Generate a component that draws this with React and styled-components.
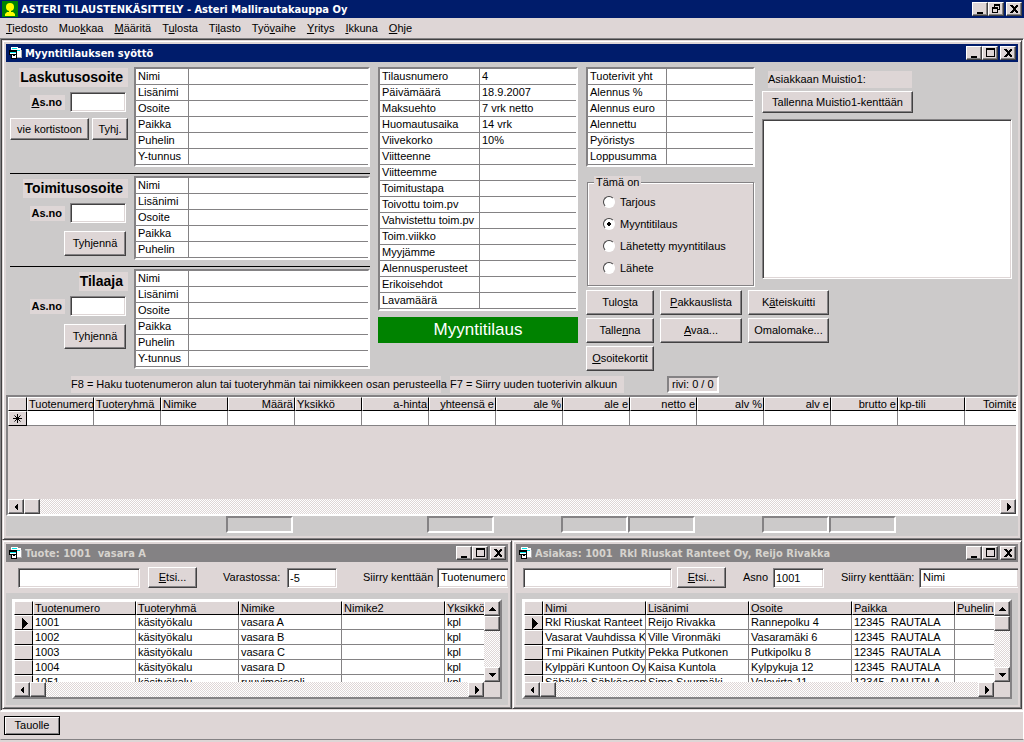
import React, { useState } from "react";
import styled, { createGlobalStyle, css } from "styled-components";

const face = "#ded6d6";
const panel = "#cccaca";
const navy = "#001c6b";
const grey = "#848284";
const dark = "#424142";

const menus = [
  "&Tiedosto",
  "Muo&kkaa",
  "&Määritä",
  "T&ulosta",
  "Ti&lasto",
  "Työ&vaihe",
  "&Yritys",
  "&Ikkuna",
  "&Ohje",
];

const addressRows = ["Nimi", "Lisänimi", "Osoite", "Paikka", "Puhelin"];

const orderRows = [
  ["Tilausnumero", "4"],
  ["Päivämäärä", "18.9.2007"],
  ["Maksuehto", "7 vrk netto"],
  ["Huomautusaika", "14 vrk"],
  ["Viivekorko", "10%"],
  ["Viitteenne", ""],
  ["Viitteemme", ""],
  ["Toimitustapa", ""],
  ["Toivottu toim.pv", ""],
  ["Vahvistettu toim.pv", ""],
  ["Toim.viikko", ""],
  ["Myyjämme", ""],
  ["Alennusperusteet", ""],
  ["Erikoisehdot", ""],
  ["Lavamäärä", ""],
];

const totalRows = [
  "Tuoterivit yht",
  "Alennus %",
  "Alennus euro",
  "Alennettu",
  "Pyöristys",
  "Loppusumma",
];

const orderTypes = ["Tarjous", "Myyntitilaus", "Lähetetty myyntitilaus", "Lähete"];

const actions = [
  "Tulo&sta",
  "&Pakkauslista",
  "K&äteiskuitti",
  "Talle&nna",
  "&Avaa...",
  "Omalomake...",
  "&Osoitekortit",
];

const lineColumns = [
  { name: "Tuotenumero" },
  { name: "Tuoteryhmä" },
  { name: "Nimike" },
  { name: "Määrä", right: true },
  { name: "Yksikkö" },
  { name: "a-hinta", right: true },
  { name: "yhteensä e", right: true },
  { name: "ale %", right: true },
  { name: "ale e", right: true },
  { name: "netto e", right: true },
  { name: "alv %", right: true },
  { name: "alv e", right: true },
  { name: "brutto e", right: true },
  { name: "kp-tili" },
  { name: "Toimitettu", right: true },
];

// grid columns that have a sum box under them
const sumColumns = [4, 7, 9, 10, 12, 13];

const productColumns = ["Tuotenumero", "Tuoteryhmä", "Nimike", "Nimike2", "Yksikkö"];
const products = [
  ["1001", "käsityökalu", "vasara A", "", "kpl"],
  ["1002", "käsityökalu", "vasara B", "", "kpl"],
  ["1003", "käsityökalu", "vasara C", "", "kpl"],
  ["1004", "käsityökalu", "vasara D", "", "kpl"],
  ["1051", "käsityökalu", "ruuvimeisseli", "", "kpl"],
];

const customerColumns = ["Nimi", "Lisänimi", "Osoite", "Paikka", "Puhelin"];
const customers = [
  ["Rkl Riuskat Ranteet", "Reijo Rivakka", "Rannepolku 4", "12345  RAUTALA", ""],
  ["Vasarat Vauhdissa Ky", "Ville Vironmäki", "Vasaramäki 6", "12345  RAUTALA", ""],
  ["Tmi Pikainen Putkityö", "Pekka Putkonen", "Putkipolku 8", "12345  RAUTALA", ""],
  ["Kylppäri Kuntoon Oy", "Kaisa Kuntola", "Kylpykuja 12", "12345  RAUTALA", ""],
  ["Sähäkkä Sähköasennus", "Simo Suurmäki", "Valovirta 11", "12345  RAUTALA", ""],
];

const Mnemonic = ({ text }) => {
  const at = text.indexOf("&");
  if (at < 0) return <span>{text}</span>;
  return (
    <span>
      {text.slice(0, at)}
      <u>{text[at + 1]}</u>
      {text.slice(at + 2)}
    </span>
  );
};

const FormIcon = () => (
  <svg width="14" height="14" viewBox="0 0 14 14" shapeRendering="crispEdges" aria-hidden="true">
    <path d="M3 1h7v1h3v9H7V7H3z" fill="#fff" />
    <path d="M4 2h5v1H4zM8 4h4v1H8z" fill="#00e3e7" />
    <path d="M13 4h1v8H9v-1h4z" fill="#adaaad" />
    <path d="M1 4h8v9H3V9H1z" fill="#000" />
    <path d="M2 6h6v1H2z" fill="#00e3e7" />
    <path d="M2 7h6v1H2zM4 9h4v3H4z" fill="#fff" />
    <path d="M5 9h2v1H5z" fill="#000" />
  </svg>
);

const AppIcon = () => (
  <svg width="16" height="16" viewBox="0 0 16 16" aria-hidden="true">
    <path d="M0 0h16v16H0z" fill="#008200" />
    <circle cx="8" cy="6" r="4" fill="#ff0" />
    <path d="M7 9h2v3H7z" fill="#ff0" />
    <path d="M3 15v-2l2-2h6l2 2v2z" fill="#ff0" />
  </svg>
);

const glyphs = {
  min: "M3 9h6v2H3z",
  max: "M2 1h9v9H2zM3 3v6h7V3z",
  restore: "M4 1h6v6H8v3H2V4h2zM5 3v1h3v2h1V3zM3 6v3h4V6z",
  close: "M2 2h2l2 2 2-2h2v1L7 6l3 3v1H8L6 8l-2 2H2V9l3-3-3-3z",
  left: "M8 2v8L4 6z",
  right: "M5 2v8l4-4z",
  up: "M2 8h8L6 4z",
  down: "M2 4h8L6 8z",
  row: "M4 1v11l6-5.5z",
};

const Glyph = ({ name }) => (
  <svg width="12" height="12" viewBox="0 0 12 12" shapeRendering="crispEdges" aria-hidden="true">
    <path d={glyphs[name]} fill="#000" fillRule="evenodd" />
  </svg>
);

const NewRowIcon = () => (
  <svg width="11" height="11" viewBox="0 0 11 11" aria-hidden="true">
    <path
      d="M5.5 1v9M1 5.5h9M2.5 2.5l6 6M8.5 2.5l-6 6"
      stroke="#000"
      strokeWidth="1"
      fill="none"
    />
  </svg>
);

const WindowButtons = ({ restore }) => (
  <Controls>
    <ControlButton aria-label="Pienennä">
      <Glyph name="min" />
    </ControlButton>
    <ControlButton aria-label="Suurenna">
      <Glyph name={restore ? "restore" : "max"} />
    </ControlButton>
    <ControlButton aria-label="Sulje" $gap>
      <Glyph name="close" />
    </ControlButton>
  </Controls>
);

const HorizontalScroll = () => (
  <Track>
    <ScrollButton aria-label="Vasemmalle">
      <Glyph name="left" />
    </ScrollButton>
    <Thumb />
    <Spacer />
    <ScrollButton aria-label="Oikealle">
      <Glyph name="right" />
    </ScrollButton>
  </Track>
);

const VerticalScroll = () => (
  <Track $vertical>
    <ScrollButton aria-label="Ylös">
      <Glyph name="up" />
    </ScrollButton>
    <Thumb />
    <Spacer />
    <ScrollButton aria-label="Alas">
      <Glyph name="down" />
    </ScrollButton>
  </Track>
);

const Properties = ({ rows, labelWidth, label }) => (
  <PropertyTable aria-label={label}>
    <tbody>
      {rows.map(([name, value]) => (
        <tr key={name}>
          <PropertyName scope="row" $width={labelWidth}>
            {name}
          </PropertyName>
          <PropertyValue>{value}</PropertyValue>
        </tr>
      ))}
    </tbody>
  </PropertyTable>
);

const AddressSection = ({ id, title, numberLabel, rows, first, children }) => (
  <Address>
    <AddressSide $first={first}>
      <AddressTitle>{title}</AddressTitle>
      <NumberRow>
        <NumberLabel htmlFor={id}>
          <Mnemonic text={numberLabel} />
        </NumberLabel>
        <TextBox id={id} $width={56} />
      </NumberRow>
      <SideButtons $first={first}>{children}</SideButtons>
    </AddressSide>
    <Properties label={title} labelWidth={53} rows={rows.map((r) => [r, ""])} />
  </Address>
);

const BrowseGrid = ({ label, columns, rows }) => (
  <BrowseFrame>
    <BrowseView>
      <BrowseClip>
        <GridTable $width={533} aria-label={label}>
          <colgroup>
            <MarkCol />
            {columns.map((c) => (
              <DataCol key={c} $width={103} />
            ))}
          </colgroup>
          <thead>
            <tr>
              <GridHead />
              {columns.map((c) => (
                <GridHead key={c}>{c}</GridHead>
              ))}
            </tr>
          </thead>
          <tbody>
            {rows.map((row, i) => (
              <tr key={row[0]}>
                <RowMark>{i === 0 && <Glyph name="row" />}</RowMark>
                {row.map((cell, j) => (
                  <GridCell key={j}>{cell}</GridCell>
                ))}
              </tr>
            ))}
          </tbody>
        </GridTable>
      </BrowseClip>
      <VerticalScroll />
    </BrowseView>
    <BrowseFoot>
      <HorizontalScroll />
      <Corner />
    </BrowseFoot>
  </BrowseFrame>
);

const App = () => {
  const [type, setType] = useState("Myyntitilaus");

  return (
    <Page>
      <GlobalStyle />
      <AppTitle>
        <AppIcon />
        <TitleText>ASTERI TILAUSTENKÄSITTELY - Asteri Mallirautakauppa Oy</TitleText>
        <WindowButtons restore />
      </AppTitle>
      <MenuBar>
        {menus.map((m) => (
          <MenuItem key={m}>
            <Mnemonic text={m} />
          </MenuItem>
        ))}
      </MenuBar>

      <Workspace>
        <Window>
          <WindowTitle $active>
            <FormIcon />
            <TitleText>Myyntitilauksen syöttö</TitleText>
            <WindowButtons />
          </WindowTitle>
          <OrderForm>
            <FormColumns>
              <AddressColumn>
                <AddressSection
                  id="billing"
                  title="Laskutusosoite"
                  numberLabel="&As.no"
                  rows={[...addressRows, "Y-tunnus"]}
                  first
                >
                  <Button $width={79}>vie kortistoon</Button>
                  <Button $width={36}>Tyhj.</Button>
                </AddressSection>
                <Rule />
                <AddressSection
                  id="delivery"
                  title="Toimitusosoite"
                  numberLabel="As.no"
                  rows={addressRows}
                >
                  <Button $width={62} $tall>
                    Tyhjennä
                  </Button>
                </AddressSection>
                <Rule />
                <AddressSection
                  id="orderer"
                  title="Tilaaja"
                  numberLabel="As.no"
                  rows={[...addressRows, "Y-tunnus"]}
                >
                  <Button $width={62} $tall>
                    Tyhjennä
                  </Button>
                </AddressSection>
              </AddressColumn>

              <OrderColumn>
                <Properties label="Tilauksen tiedot" labelWidth={100} rows={orderRows} />
                <Banner>Myyntitilaus</Banner>
              </OrderColumn>

              <RightColumn>
                <RightTop>
                  <TotalsColumn>
                    <Properties
                      label="Summat"
                      labelWidth={79}
                      rows={totalRows.map((r) => [r, ""])}
                    />
                    <TypeGroup>
                      <legend>Tämä on</legend>
                      {orderTypes.map((t) => (
                        <TypeOption key={t}>
                          <Radio
                            type="radio"
                            name="type"
                            checked={type === t}
                            onChange={() => setType(t)}
                          />
                          {t}
                        </TypeOption>
                      ))}
                    </TypeGroup>
                  </TotalsColumn>
                  <MemoColumn>
                    <MemoLabel htmlFor="memo">Asiakkaan Muistio1:</MemoLabel>
                    <Button $width={151}>Tallenna Muistio1-kenttään</Button>
                    <Memo id="memo" />
                  </MemoColumn>
                </RightTop>
                <Actions>
                  {actions.map((a) => (
                    <Button key={a} $tall>
                      <Mnemonic text={a} />
                    </Button>
                  ))}
                </Actions>
              </RightColumn>
            </FormColumns>

            <Hints>
              <Hint $width={370}>
                F8 = Haku tuotenumeron alun tai tuoteryhmän tai nimikkeen osan perusteella
              </Hint>
              <Hint $width={174}>F7 = Siirry uuden tuoterivin alkuun</Hint>
              <RowCount>rivi: 0 / 0</RowCount>
            </Hints>

            <LinesFrame>
              <LinesClip>
                <GridTable $width={1024} aria-label="Tuoterivit">
                  <colgroup>
                    <MarkCol />
                    {lineColumns.map((c) => (
                      <DataCol key={c.name} $width={67} />
                    ))}
                  </colgroup>
                  <thead>
                    <tr>
                      <GridHead />
                      {lineColumns.map((c) => (
                        <GridHead key={c.name} $right={c.right}>
                          {c.name}
                        </GridHead>
                      ))}
                    </tr>
                  </thead>
                  <tbody>
                    <tr>
                      <RowMark>
                        <NewRowIcon />
                      </RowMark>
                      {lineColumns.map((c) => (
                        <GridCell key={c.name} />
                      ))}
                    </tr>
                  </tbody>
                </GridTable>
              </LinesClip>
              <HorizontalScroll />
            </LinesFrame>
            <Sums>
              {sumColumns.map((c) => (
                <SumBox key={c} $column={c} />
              ))}
            </Sums>
          </OrderForm>
        </Window>

        <WindowRow>
          <Window>
            <WindowTitle>
              <FormIcon />
              <TitleText>{"Tuote: 1001  vasara A"}</TitleText>
              <WindowButtons />
            </WindowTitle>
            <SearchBar $pad={12}>
              <TextBox $width={122} aria-label="Hae tuote" />
              <SearchButton>
                <Mnemonic text="&Etsi..." />
              </SearchButton>
              <SearchLabel htmlFor="stock" $width={64}>
                Varastossa:
              </SearchLabel>
              <TextBox id="stock" $width={50} defaultValue="-5" />
              <SearchLabel htmlFor="productField" $width={74}>
                Siirry kenttään
              </SearchLabel>
              <FieldSelect id="productField" defaultValue="Tuotenumero">
                <option>Tuotenumero</option>
              </FieldSelect>
            </SearchBar>
            <BrowseArea>
              <BrowseGrid label="Tuotteet" columns={productColumns} rows={products} />
            </BrowseArea>
          </Window>
          <Window>
            <WindowTitle>
              <FormIcon />
              <TitleText>{"Asiakas: 1001  Rkl Riuskat Ranteet Oy, Reijo Rivakka"}</TitleText>
              <WindowButtons />
            </WindowTitle>
            <SearchBar $pad={7}>
              <TextBox $width={149} aria-label="Hae asiakas" />
              <SearchButton $near>
                <Mnemonic text="&Etsi..." />
              </SearchButton>
              <SearchLabel htmlFor="customerNo" $width={30} $near>
                Asno
              </SearchLabel>
              <TextBox id="customerNo" $width={51} defaultValue="1001" />
              <SearchLabel htmlFor="customerField" $width={78} $near>
                Siirry kenttään:
              </SearchLabel>
              <FieldSelect id="customerField" defaultValue="Nimi">
                <option>Nimi</option>
              </FieldSelect>
            </SearchBar>
            <BrowseArea>
              <BrowseGrid label="Asiakkaat" columns={customerColumns} rows={customers} />
            </BrowseArea>
          </Window>
        </WindowRow>
      </Workspace>

      <StatusBar>
        <PauseButton>Tauolle</PauseButton>
      </StatusBar>
    </Page>
  );
};

const GlobalStyle = createGlobalStyle`
  * {
    box-sizing: border-box;
  }
  body {
    margin: 0;
    background: ${face};
  }
  body, button, input, select, textarea {
    font-family: "Liberation Sans", Arial, sans-serif;
    font-size: 11px;
    line-height: 13px;
    color: #000;
  }
  button {
    padding: 0;
    white-space: nowrap;
  }
  svg {
    display: block;
    flex: none;
  }
`;

const raised = css`
  border: 1px solid;
  border-color: #fff ${dark} ${dark} #fff;
  box-shadow: inset -1px -1px 0 ${grey};
  background: ${face};
`;

const sunken = css`
  border: 1px solid;
  border-color: ${grey} #fff #fff ${grey};
  box-shadow: inset 1px 1px 0 ${dark}, inset -1px -1px 0 ${face};
  background: #fff;
`;

const groove = css`
  border: 2px solid;
  border-color: ${grey} #fff #fff ${grey};
`;

const Page = styled.div`
  display: flex;
  flex-direction: column;
  min-height: 100vh;
`;

const titleBar = css`
  display: flex;
  align-items: center;
  height: 18px;
  gap: 3px;
  padding: 0 2px;
`;

const AppTitle = styled.header`
  ${titleBar}
  background: ${navy};
  color: #fff;
`;

const WindowTitle = styled.div`
  ${titleBar}
  background: ${(p) => (p.$active ? navy : grey)};
  color: ${(p) => (p.$active ? "#fff" : "#d6d3ce")};
`;

const TitleText = styled.span`
  flex: 1;
  min-width: 0;
  overflow: hidden;
  font-family: "DejaVu Sans Condensed", "DejaVu Sans", sans-serif;
  font-weight: bold;
  font-size: 11px;
  white-space: pre;
`;

const Controls = styled.div`
  display: flex;
`;

const ControlButton = styled.button`
  ${raised}
  width: 16px;
  height: 14px;
  margin-left: ${(p) => (p.$gap ? 2 : 0)}px;
  display: flex;
  justify-content: center;
`;

const MenuBar = styled.nav`
  display: flex;
  align-items: center;
  height: 20px;
  gap: 11px;
  padding-left: 6px;
  background: ${face};
`;

const MenuItem = styled.button`
  border: 0;
  background: none;
`;

const Workspace = styled.main`
  border: 1px solid;
  border-color: ${grey} #fff #fff ${grey};
  box-shadow: inset 1px 1px 0 ${dark};
  padding: 1px;
`;

const Window = styled.section`
  flex: 1;
  min-width: 0;
  padding: 3px;
  border: 1px solid;
  border-color: ${face} ${dark} ${dark} ${face};
  box-shadow: inset 1px 1px 0 #fff, inset -1px -1px 0 ${grey};
  background: ${face};
`;

const WindowRow = styled.div`
  display: flex;
`;

const OrderForm = styled.div`
  background: ${panel};
  padding-top: 5px;
`;

const FormColumns = styled.div`
  display: flex;
  align-items: flex-start;
  gap: 8px;
  padding: 0 6px 0 4px;
`;

const AddressColumn = styled.div`
  width: 360px;
`;

const Rule = styled.hr`
  margin: 6px 0 2px;
  border: 0;
  border-top: 1px solid #000;
`;

const Address = styled.div`
  display: grid;
  grid-template-columns: 124px 1fr;
`;

const AddressSide = styled.div`
  display: flex;
  flex-direction: column;
  align-items: flex-end;
  padding-right: 6px;
  padding-top: ${(p) => (p.$first ? 1 : 3)}px;
`;

const AddressTitle = styled.h2`
  margin: 0 0 5px;
  padding: 0 5px 0 1px;
  font-size: 14px;
  line-height: 19px;
  background: ${face};
`;

const NumberRow = styled.div`
  display: flex;
  align-items: center;
  gap: 5px;
  padding-right: 2px;
`;

const NumberLabel = styled.label`
  font-weight: bold;
  line-height: 15px;
  padding: 0 3px 0 1px;
  background: ${face};
`;

const TextBox = styled.input`
  ${sunken}
  width: ${(p) => p.$width}px;
  height: 20px;
  padding: 0 2px;
`;

const SideButtons = styled.div`
  display: flex;
  gap: 3px;
  margin-top: ${(p) => (p.$first ? 6 : 8)}px;
  padding-right: ${(p) => (p.$first ? 0 : 2)}px;
`;

const Button = styled.button`
  ${raised}
  width: ${(p) => (p.$width ? p.$width + "px" : "auto")};
  height: ${(p) => (p.$tall ? 25 : 22)}px;
`;

const PropertyTable = styled.table`
  ${groove}
  width: 100%;
  border-spacing: 0;
  table-layout: fixed;
  align-self: start;
  background: #fff;
`;

const PropertyName = styled.th`
  width: ${(p) => p.$width}px;
  height: 16px;
  padding: 0 0 0 2px;
  border-right: 1px solid ${grey};
  border-bottom: 1px solid ${grey};
  font-weight: normal;
  text-align: left;
  white-space: nowrap;
`;

const PropertyValue = styled.td`
  padding: 0 2px;
  border-bottom: 1px solid ${grey};
`;

const OrderColumn = styled.div`
  width: 200px;
`;

const Banner = styled.div`
  margin-top: 6px;
  background: #008200;
  color: #fff;
  font-size: 17px;
  line-height: 26px;
  text-align: center;
`;

const RightColumn = styled.div`
  flex: 1;
`;

const RightTop = styled.div`
  display: flex;
  gap: 7px;
`;

const TotalsColumn = styled.div`
  width: 169px;
`;

const TypeGroup = styled.fieldset`
  margin: 9px 1px 0;
  padding: 2px 0 6px 15px;
  border: 1px solid ${grey};
  box-shadow: inset 1px 1px 0 #fff, 1px 1px 0 #fff;
  background: ${face};

  legend {
    margin-left: -9px;
    padding: 0 2px;
    line-height: 13px;
    background: ${face};
  }
`;

const TypeOption = styled.label`
  display: flex;
  align-items: center;
  gap: 5px;
  height: 22px;
`;

const Radio = styled.input`
  appearance: none;
  width: 12px;
  height: 12px;
  margin: 0;
  border: 1px solid;
  border-color: ${dark} #fff #fff ${dark};
  border-radius: 50%;
  background: #fff;

  &:checked {
    background: radial-gradient(circle, #000 0 2px, #fff 2px);
  }
`;

const MemoColumn = styled.div`
  flex: 1;
  display: flex;
  flex-direction: column;
  align-items: flex-start;
  padding-top: 4px;
`;

const MemoLabel = styled.label`
  width: 144px;
  margin: 0 0 3px 6px;
  line-height: 17px;
  background: ${face};
`;

const Memo = styled.textarea`
  ${sunken}
  flex: 1;
  width: 100%;
  margin: 6px 0 7px;
  resize: none;
`;

const Actions = styled.div`
  display: grid;
  grid-template-columns: 68px 82px 81px;
  gap: 3px 6px;
  margin-top: 4px;
`;

const Hints = styled.div`
  display: flex;
  align-items: center;
  padding: 5px 0 2px 65px;
`;

const Hint = styled.span`
  width: ${(p) => p.$width}px;
  margin-right: 9px;
  line-height: 17px;
  white-space: nowrap;
  background: ${face};
`;

const RowCount = styled.output`
  ${groove}
  margin-left: 34px;
  padding: 0 3px;
  background: ${face};
`;

const LinesFrame = styled.div`
  ${groove}
  background: ${face};
`;

const LinesClip = styled.div`
  height: 102px;
  overflow: hidden;
`;

const GridTable = styled.table`
  width: ${(p) => p.$width}px;
  border-spacing: 0;
  table-layout: fixed;
`;

const MarkCol = styled.col`
  width: 19px;
`;

const DataCol = styled.col`
  width: ${(p) => p.$width}px;
`;

const GridHead = styled.th`
  height: 14px;
  padding: 0 1px;
  border: 1px solid;
  border-color: #fff #000 #000 #fff;
  background: ${face};
  font-weight: normal;
  line-height: 12px;
  text-align: ${(p) => (p.$right ? "right" : "left")};
  white-space: nowrap;
  overflow: hidden;
`;

const GridCell = styled.td`
  height: 15px;
  padding: 0 2px;
  border-right: 1px solid ${grey};
  border-bottom: 1px solid ${grey};
  background: #fff;
  line-height: 14px;
  white-space: pre;
  overflow: hidden;
`;

const RowMark = styled.td`
  height: 15px;
  padding: 0 0 0 3px;
  border: 1px solid;
  border-color: #fff #000 #000 #fff;
  background: ${face};
`;

const Track = styled.div`
  display: flex;
  flex: ${(p) => (p.$vertical ? "none" : "1")};
  flex-direction: ${(p) => (p.$vertical ? "column" : "row")};
  background: conic-gradient(#fff 25%, ${face} 0 50%, #fff 0 75%, ${face} 0) 0 0 / 2px 2px;
`;

const ScrollButton = styled.button`
  ${raised}
  display: flex;
  align-items: center;
  justify-content: center;
  width: 16px;
  height: 15px;
`;

const Thumb = styled.div`
  ${raised}
  width: 16px;
  height: 15px;
`;

const Spacer = styled.div`
  flex: 1;
`;

const Sums = styled.div`
  display: grid;
  grid-template-columns: repeat(14, 67px);
  height: 20px;
  padding-left: 19px;
  overflow: hidden;
`;

const SumBox = styled.output`
  ${groove}
  grid-column: ${(p) => p.$column};
  height: 17px;
`;

const SearchBar = styled.div`
  display: flex;
  align-items: center;
  height: 31px;
  padding-left: ${(p) => p.$pad}px;
`;

const SearchButton = styled.button`
  ${raised}
  width: 49px;
  height: 21px;
  margin-left: ${(p) => (p.$near ? 5 : 8)}px;
`;

const SearchLabel = styled.label`
  width: ${(p) => p.$width}px;
  margin-left: ${(p) => (p.$near ? 17 : 26)}px;
  white-space: nowrap;
`;

const FieldSelect = styled.select`
  ${sunken}
  appearance: none;
  flex: 1;
  min-width: 0;
  height: 20px;
  padding: 0 3px;
  border-right: 0;
  border-radius: 0;
`;

const BrowseArea = styled.div`
  padding: 6px;
  background: ${panel};
`;

const BrowseFrame = styled.div`
  border: 2px solid;
  border-color: #fff ${grey} ${grey} #fff;
  background: ${face};
`;

const BrowseView = styled.div`
  display: flex;
  height: 81px;
`;

const BrowseClip = styled.div`
  flex: 1;
  min-width: 0;
  overflow: hidden;
`;

const BrowseFoot = styled.div`
  display: flex;
`;

const Corner = styled.div`
  width: 16px;
  height: 15px;
`;

const StatusBar = styled.footer`
  display: flex;
  align-items: center;
  height: 29px;
  padding-left: 3px;
  border: 1px solid;
  border-color: #fff #fff ${grey} ${face};
`;

const PauseButton = styled.button`
  ${raised}
  width: 56px;
  height: 19px;
  border-color: #000;
  box-shadow: inset 1px 1px 0 #fff, inset -1px -1px 0 ${grey};
`;

export default App;
